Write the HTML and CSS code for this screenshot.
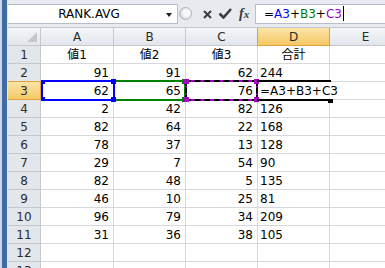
FILE: index.html
```html
<!DOCTYPE html>
<html lang="ja">
<head>
  <meta charset="UTF-8">
  <title>RANK.AVG</title>
  <link rel="stylesheet" href="styles.css">
</head>
<body>
  <div class="window">
    <div class="frame"></div>
    <div class="main">
      <!-- 数式バー -->
      <div class="formula-bar">
        <div class="name-box">
          <span class="name">RANK.AVG</span>
          <span class="arrow"></span>
        </div>
        <div class="splitter"></div>
        <div class="buttons">
          <svg class="btn-cancel" width="9" height="9" viewBox="0 0 9 9"><path d="M1 1L8 8M8 1L1 8" stroke="#3c3c3c" stroke-width="2" fill="none"/></svg>
          <svg class="btn-enter" width="14" height="11" viewBox="0 0 14 11"><path d="M1.5 5.5L5.5 9.5L13 1" stroke="#3c3c3c" stroke-width="2.6" fill="none"/></svg>
          <span class="fx">f<span class="fx-x">x</span></span>
        </div>
        <div class="formula">=<span class="ref-a">A3</span>+<span class="ref-b">B3</span>+<span class="ref-c">C3</span><span class="caret"></span></div>
      </div>

      <!-- シート -->
      <div class="sheet">
        <div class="cell hdr corner"><span class="tri"></span></div>
        <div class="cell hdr">A</div>
        <div class="cell hdr">B</div>
        <div class="cell hdr">C</div>
        <div class="cell hdr sel-col">D</div>
        <div class="cell hdr">E</div>

        <div class="cell rowhdr">1</div>
        <div class="cell center">値1</div>
        <div class="cell center">値2</div>
        <div class="cell center">値3</div>
        <div class="cell center">合計</div>
        <div class="cell"></div>

        <div class="cell rowhdr">2</div>
        <div class="cell num">91</div>
        <div class="cell num">91</div>
        <div class="cell num">62</div>
        <div class="cell txt">244</div>
        <div class="cell"></div>

        <div class="cell rowhdr sel-row">3</div>
        <div class="cell num">62<span class="range range-a"><i class="h tl small"></i><i class="h tr"></i><i class="h bl small"></i><i class="h br"></i></span></div>
        <div class="cell num">65<span class="range range-b"><i class="h tr"></i><i class="h br"></i></span></div>
        <div class="cell num">76<span class="range range-c"><span class="dash"></span><i class="h tl"></i><i class="h tr"></i><i class="h bl"></i><i class="h br"></i></span></div>
        <div class="cell txt editing">=A3+B3+C3<span class="active"><i class="fill"></i></span></div>
        <div class="cell"></div>

        <div class="cell rowhdr">4</div>
        <div class="cell num">2</div>
        <div class="cell num">42</div>
        <div class="cell num">82</div>
        <div class="cell txt">126</div>
        <div class="cell"></div>

        <div class="cell rowhdr">5</div>
        <div class="cell num">82</div>
        <div class="cell num">64</div>
        <div class="cell num">22</div>
        <div class="cell txt">168</div>
        <div class="cell"></div>

        <div class="cell rowhdr">6</div>
        <div class="cell num">78</div>
        <div class="cell num">37</div>
        <div class="cell num">13</div>
        <div class="cell txt">128</div>
        <div class="cell"></div>

        <div class="cell rowhdr">7</div>
        <div class="cell num">29</div>
        <div class="cell num">7</div>
        <div class="cell num">54</div>
        <div class="cell txt">90</div>
        <div class="cell"></div>

        <div class="cell rowhdr">8</div>
        <div class="cell num">82</div>
        <div class="cell num">48</div>
        <div class="cell num">5</div>
        <div class="cell txt">135</div>
        <div class="cell"></div>

        <div class="cell rowhdr">9</div>
        <div class="cell num">46</div>
        <div class="cell num">10</div>
        <div class="cell num">25</div>
        <div class="cell txt">81</div>
        <div class="cell"></div>

        <div class="cell rowhdr">10</div>
        <div class="cell num">96</div>
        <div class="cell num">79</div>
        <div class="cell num">34</div>
        <div class="cell txt">209</div>
        <div class="cell"></div>

        <div class="cell rowhdr">11</div>
        <div class="cell num">31</div>
        <div class="cell num">36</div>
        <div class="cell num">38</div>
        <div class="cell txt">105</div>
        <div class="cell"></div>

        <div class="cell rowhdr">12</div>
        <div class="cell"></div>
        <div class="cell"></div>
        <div class="cell"></div>
        <div class="cell"></div>
        <div class="cell"></div>

        <div class="cell rowhdr">13</div>
        <div class="cell"></div>
        <div class="cell"></div>
        <div class="cell"></div>
        <div class="cell"></div>
        <div class="cell"></div>
      </div>
    </div>
  </div>
</body>
</html>
```

FILE: styles.css
```css
/* Grundlayout */
* {
  box-sizing: border-box;
}
body {
  margin: 0;
  width: 385px;
  height: 268px;
  overflow: hidden;
  background: #fff;
  color: #000;
  font-family: "DejaVu Sans", "Noto Sans CJK JP", sans-serif;
  font-size: 12px;
}
.window {
  display: flex;
  height: 268px;
}
.frame {
  flex: none;
  width: 8px;
  background: linear-gradient(to right, #cdd8e5 0 2px, #3f6ca4 2px 7px, #e7ecf2 7px);
}
.main {
  flex: 1;
  min-width: 0;
  overflow: hidden;
}

/* Formelleiste */
.formula-bar {
  height: 28px;
  display: flex;
  align-items: flex-start;
  padding-top: 4px;
  background: #e7ebf0;
  border-bottom: 1px solid #c3c9d1;
}
.name-box {
  flex: none;
  width: 170px;
  height: 20px;
  display: flex;
  align-items: center;
  background: #fff;
  border: 1px solid #b5bec9;
  border-left: none;
}
.name {
  flex: 1;
  padding-left: 10px;
  text-align: center;
}
.arrow {
  width: 0;
  height: 0;
  margin: 1px 5px 0 6px;
  border-top: 4px solid #1e1e1e;
  border-left: 3.5px solid transparent;
  border-right: 3.5px solid transparent;
}
.splitter {
  flex: none;
  width: 13px;
  height: 13px;
  margin: 3px 0 0 1px;
  border-radius: 50%;
  border: 1px solid #aab3be;
  background: radial-gradient(circle at 60% 45%, #f7f8fa 0 35%, #cfd5dc 75%);
}
.buttons {
  flex: none;
  width: 63px;
  height: 20px;
  display: flex;
  align-items: center;
}
.btn-cancel {
  margin-left: 11px;
}
.btn-enter {
  margin-left: 6px;
  margin-top: -1px;
}
.fx {
  margin-left: 7px;
  font-family: "Liberation Serif", serif;
  font-style: italic;
  font-weight: bold;
  font-size: 14px;
  color: #3a3a3a;
}
.fx-x {
  font-size: 11px;
}
.formula {
  flex: 1;
  height: 20px;
  padding-left: 8px;
  line-height: 18px;
  white-space: nowrap;
  background: #fff;
  border: 1px solid #b5bec9;
  border-right: none;
}
.ref-a { color: #0000ff; }
.ref-b { color: #008000; }
.ref-c { color: #9900cc; }
.caret {
  display: inline-block;
  width: 1px;
  height: 15px;
  margin-left: 1px;
  vertical-align: -3px;
  background: #000;
}

/* Tabelle */
.sheet {
  display: grid;
  grid-template-columns: 33px 73px 72px 72px 72px 72px;
  grid-auto-rows: 18px;
}
.cell {
  position: relative;
  padding: 1px 3px 0;
  line-height: 17px;
  white-space: nowrap;
  border-right: 1px solid #d6d8db;
  border-bottom: 1px solid #d6d8db;
}
.hdr,
.rowhdr {
  color: #2b2b2b;
  text-align: center;
  border-color: #c4c9d0;
}
.hdr {
  background: linear-gradient(#f4f6f8, #e2e6eb);
}
.rowhdr {
  background: #e3e6eb;
}
.corner {
  display: flex;
  justify-content: flex-end;
  align-items: flex-end;
  padding: 0 3px 3px 0;
}
.tri {
  width: 0;
  height: 0;
  border-left: 10px solid transparent;
  border-bottom: 10px solid #c5c9cf;
}
.sel-col,
.sel-row {
  background: linear-gradient(#fae4a6, #f4c965);
  border-color: #e1a040;
}
.sel-col {
  box-shadow: -1px 0 0 #e1a040;
}
.sel-row {
  box-shadow: 0 -1px 0 #e1a040;
}
.center {
  text-align: center;
}
.num {
  text-align: right;
  padding-right: 4px;
}
.txt {
  padding-left: 2px;
}
.editing {
  border-right-color: transparent;
}

/* Bezugsrahmen */
.range {
  position: absolute;
  top: -2px;
  bottom: -2px;
  z-index: 2;
}
.range-a {
  left: 0;
  right: -2px;
  border: 2px solid #0000ff;
  z-index: 3;
}
.range-b {
  left: -1px;
  right: -1px;
  border: 2px solid #008000;
}
.range-c {
  left: -1px;
  right: -1px;
  border: 2px solid #b000d0;
}
.dash {
  position: absolute;
  inset: -2px;
  border: 2px dashed #000;
}
.h {
  position: absolute;
  width: 5px;
  height: 5px;
}
.h.small {
  width: 4px;
  height: 4px;
}
.range-a .h { background: #0000ff; }
.range-b .h { background: #008000; }
.range-c .h { background: #b000d0; }
.tl { left: -3px; top: -3px; }
.tr { right: -3px; top: -3px; }
.bl { left: -3px; bottom: -3px; }
.br { right: -3px; bottom: -3px; }
.h.small.tl { left: -2px; top: -2px; }
.h.small.bl { left: -2px; bottom: -2px; }

.active {
  position: absolute;
  left: -1px;
  right: -2px;
  top: -2px;
  bottom: -2px;
  z-index: 4;
  border-top: 2px solid #000;
  border-bottom: 2px solid #000;
}
.fill {
  position: absolute;
  right: -2px;
  bottom: -4px;
  width: 5px;
  height: 4px;
  background: #000;
}
```
